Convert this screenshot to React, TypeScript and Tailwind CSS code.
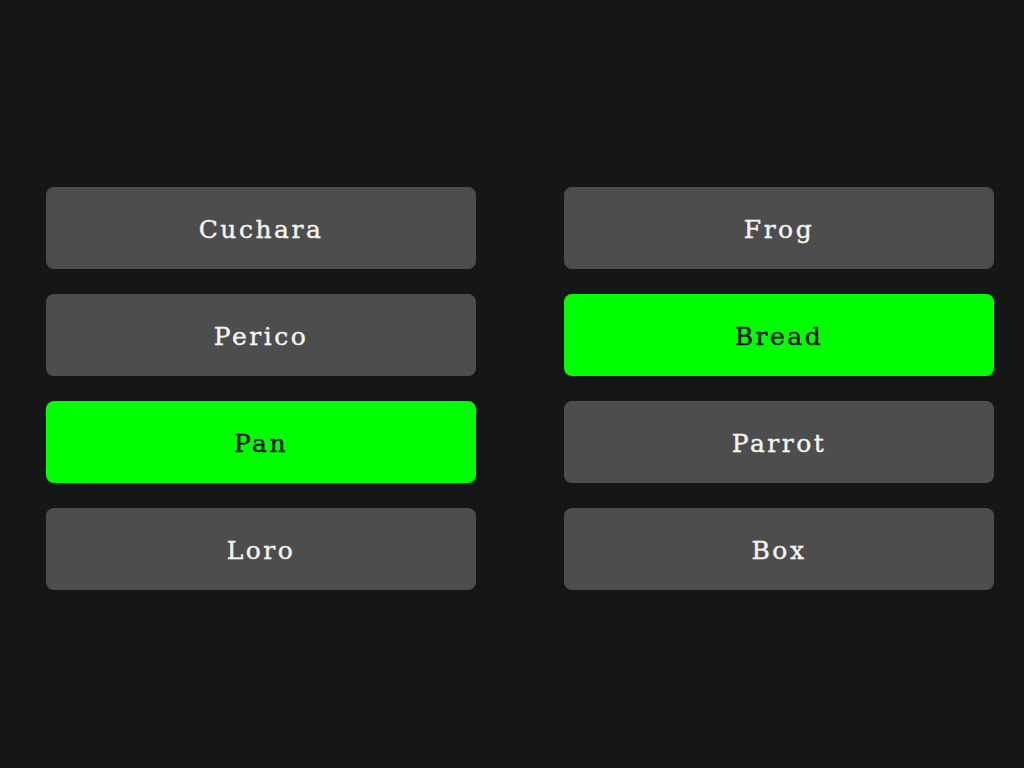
import React from "react";

const left = [
  { t: "Cuchara", on: false },
  { t: "Perico", on: false },
  { t: "Pan", on: true },
  { t: "Loro", on: false },
];
const right = [
  { t: "Frog", on: false },
  { t: "Bread", on: true },
  { t: "Parrot", on: false },
  { t: "Box", on: false },
];

function Btn({ t, on }: { t: string; on: boolean }) {
  return (
    <div
      className={
        "h-[82px] rounded-[8px] flex items-center justify-center pt-[3px] text-[25px] tracking-[2.5px] [-webkit-text-stroke:0.4px_currentColor] " +
        (on ? "bg-[#00ff00] text-[#111111]" : "bg-[#4d4d4d] text-[#f4f4f4]")
      }
      style={{ fontFamily: '"DejaVu Serif", serif' }}
    >
      {t}
    </div>
  );
}

export default function App() {
  return (
    <div className="w-[1024px] h-[768px] bg-[#151716] pt-[187px] pl-[46px] pr-[30px]">
      <div className="grid grid-cols-2 gap-x-[88px]">
        <div className="flex flex-col gap-[25px]">
          {left.map((b) => (
            <Btn key={b.t} {...b} />
          ))}
        </div>
        <div className="flex flex-col gap-[25px]">
          {right.map((b) => (
            <Btn key={b.t} {...b} />
          ))}
        </div>
      </div>
    </div>
  );
}
